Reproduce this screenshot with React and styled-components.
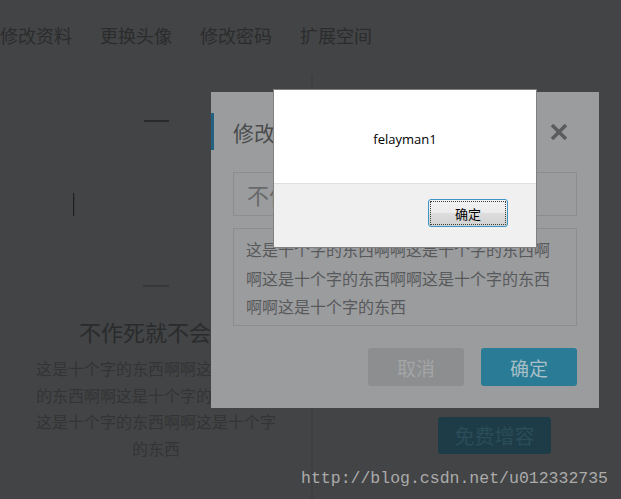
import React from "react";
import styled, { createGlobalStyle } from "styled-components";

const GlobalStyle = createGlobalStyle`
  html, body {
    margin: 0;
    padding: 0;
    background: #434445;
    font-family: "Noto Sans CJK SC", "Noto Sans", sans-serif;
  }
  #root {
    position: relative;
    width: 621px;
    height: 499px;
    overflow: hidden;
  }
`;

const LONG_TEXT =
  "这是十个字的东西啊啊这是十个字的东西啊啊这是十个字的东西啊啊这是十个字的东西啊啊这是十个字的东西";

function Avatar() {
  return (
    <svg width="167" height="168" viewBox="0 0 167 168">
      <line x1="71" y1="1" x2="96" y2="1" stroke="#1f2021" strokeWidth="1.5" />
      <line x1="0.5" y1="73" x2="0.5" y2="96" stroke="#1f2021" strokeWidth="1.5" />
      <line x1="70" y1="166" x2="96" y2="166" stroke="#2a2b2c" strokeWidth="1" />
    </svg>
  );
}

function CloseIcon() {
  return (
    <svg width="18" height="18" viewBox="0 0 18 18">
      <path d="M2 2 L16 16 M16 2 L2 16" stroke="#5b5c5e" strokeWidth="3.6" />
    </svg>
  );
}

function App() {
  return (
    <Root lang="zh-CN">
      <GlobalStyle />
      <Page>
        <Nav>
          <NavItem>修改资料</NavItem>
          <NavItem>更换头像</NavItem>
          <NavItem>修改密码</NavItem>
          <NavItem>扩展空间</NavItem>
        </Nav>
        <Main>
          <Profile>
            <Avatar />
            <Name>不作死就不会死</Name>
            <Intro>{LONG_TEXT.slice(0, 48)}</Intro>
          </Profile>
          <Side>
            <DarkButton>免费增容</DarkButton>
          </Side>
        </Main>
      </Page>

      <Modal>
        <ModalHeader>
          <ModalTitle>修改资料</ModalTitle>
          <CloseIcon />
        </ModalHeader>
        <Field>不作死就不会死</Field>
        <Area>{LONG_TEXT.slice(0, 48)}</Area>
        <Actions>
          <ActionButton>取消</ActionButton>
          <ActionButton $primary>确定</ActionButton>
        </Actions>
      </Modal>

      <Alert>
        <AlertBody>felayman1</AlertBody>
        <AlertFooter>
          <AlertButton>
            <span>确定</span>
          </AlertButton>
        </AlertFooter>
      </Alert>

      <Watermark>http://blog.csdn.net/u012332735</Watermark>
    </Root>
  );
}

const Root = styled.div`
  position: relative;
  width: 621px;
  height: 499px;
`;

const Page = styled.div`
  display: flex;
  flex-direction: column;
  height: 499px;
`;

const Nav = styled.nav`
  display: flex;
  gap: 28px;
  height: 75px;
  align-items: center;
  padding-bottom: 6px;
  box-sizing: border-box;
`;

const NavItem = styled.span`
  font-size: 18px;
  color: #2b2c2d;
  line-height: 1;
`;

const Main = styled.div`
  display: flex;
  flex: 1;
`;

const Profile = styled.section`
  width: 311px;
  display: flex;
  flex-direction: column;
  align-items: center;
  padding-top: 45px;
  padding-left: 1px;
  box-sizing: border-box;
`;

const Name = styled.h2`
  margin: 28px 0 0;
  font-size: 22px;
  font-weight: normal;
  color: #2a2b2c;
  line-height: 30px;
`;

const Intro = styled.p`
  margin: 9px 0 0;
  width: 242px;
  font-size: 16px;
  line-height: 26.7px;
  color: #333435;
  text-align: center;
`;

const Side = styled.section`
  flex: 1;
  border-left: 2px solid #3e3f40;
  padding: 342px 0 0 125px;
  box-sizing: border-box;
`;

const DarkButton = styled.div`
  width: 113px;
  height: 37px;
  border-radius: 3px;
  background: #1e3c47;
  color: #2a4d5a;
  font-size: 20px;
  display: flex;
  align-items: center;
  justify-content: center;
`;

const Modal = styled.div`
  position: absolute;
  left: 211px;
  top: 92px;
  width: 388px;
  height: 316px;
  background: #9b9c9e;
  padding: 21px 22px 0;
  box-sizing: border-box;
  display: flex;
  flex-direction: column;
`;

const ModalHeader = styled.div`
  position: relative;
  height: 37px;
  display: flex;
  align-items: center;
  justify-content: space-between;
  padding-right: 9px;

  &::before {
    content: "";
    position: absolute;
    left: -22px;
    top: 0;
    width: 3px;
    height: 37px;
    background: #22617f;
  }
`;

const ModalTitle = styled.h3`
  margin: 0;
  font-size: 21px;
  font-weight: normal;
  color: #4a4b4d;
`;

const Field = styled.div`
  margin-top: 22px;
  height: 44px;
  border: 1px solid #8c8d8f;
  box-sizing: border-box;
  padding-left: 13px;
  display: flex;
  align-items: center;
  font-size: 22px;
  color: #68696b;
`;

const Area = styled.div`
  margin-top: 12px;
  height: 98px;
  border: 1px solid #8c8d8f;
  box-sizing: border-box;
  padding: 6px 12px 0;
  font-size: 16px;
  line-height: 28.6px;
  color: #58595b;
`;

const Actions = styled.div`
  margin-top: 22px;
  display: flex;
  justify-content: flex-end;
  gap: 17px;
`;

const ActionButton = styled.div`
  width: 96px;
  height: 38px;
  border-radius: 3px;
  background: ${(p) => (p.$primary ? "#2a7b95" : "#8d8e90")};
  color: ${(p) => (p.$primary ? "#a7bfc7" : "#a4a5a7")};
  font-size: 19px;
  display: flex;
  align-items: center;
  justify-content: center;
`;

const Alert = styled.div`
  position: absolute;
  left: 273px;
  top: 89px;
  width: 264px;
  height: 159px;
  border: 1px solid #808080;
  box-sizing: border-box;
  display: flex;
  flex-direction: column;
  background: #ffffff;
`;

const AlertBody = styled.div`
  height: 93px;
  display: flex;
  align-items: center;
  justify-content: center;
  padding-top: 4px;
  box-sizing: border-box;
  font-family: "Open Sans", "Noto Sans", sans-serif;
  font-size: 13px;
  color: #000;
`;

const AlertFooter = styled.div`
  flex: 1;
  background: #f0f0f0;
  border-top: 1px solid #dfdfdf;
  display: flex;
  justify-content: flex-end;
  align-items: flex-start;
  padding: 15px 28px 0 0;
`;

const AlertButton = styled.div`
  width: 80px;
  height: 28px;
  box-sizing: border-box;
  border: 1px solid #3d95c4;
  border-radius: 3px;
  padding: 1px;
  background: linear-gradient(#f3f3f3 0%, #ebebeb 50%, #dddddd 51%, #d2d2d2 100%);

  span {
    display: flex;
    align-items: center;
    justify-content: center;
    height: 100%;
    box-sizing: border-box;
    border: 1px dotted #3a3a3a;
    border-radius: 1px;
    font-size: 13px;
    color: #000;
  }
`;

const Watermark = styled.div`
  position: absolute;
  right: 13px;
  bottom: 11px;
  font-family: "Liberation Mono", monospace;
  font-size: 16.5px;
  color: #ababab;
`;

export default App;
